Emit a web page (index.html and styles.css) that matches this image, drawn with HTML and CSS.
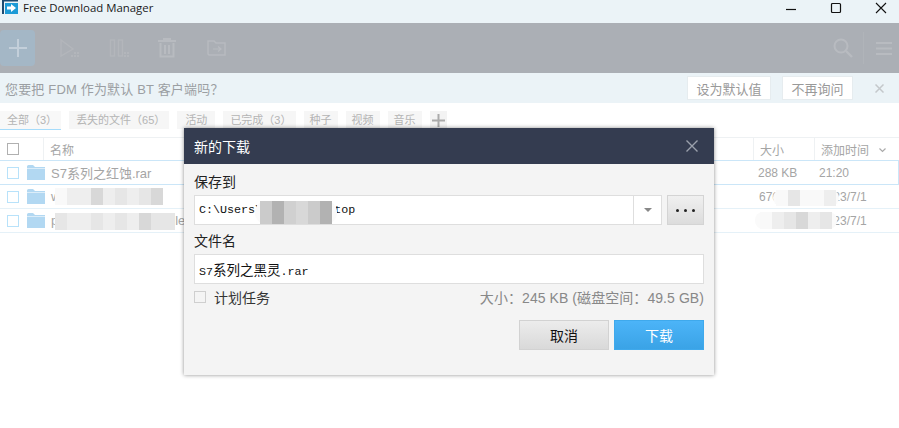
FILE: index.html
```html
<!DOCTYPE html>
<html lang="zh">
<head>
<meta charset="utf-8">
<title>Free Download Manager</title>
<link rel="stylesheet" href="styles.css">
</head>
<body>
<div class="app">
  <header class="titlebar">
    <svg class="logo" width="16" height="15" viewBox="0 0 16 15"><path d="M0 0H16V1.500H2V14H0Z" fill="#1c4a70"/><rect x="3" y="3" width="13" height="11" fill="#1c9ad6"/><path d="M5 6.500H9V4L14 8L9 12V9.500H5Z" fill="#fff"/></svg>
    <span class="app-name">Free Download Manager</span>
    <div class="winctl">
      <svg width="12" height="12" viewBox="0 0 12 12"><path d="M1 7.500H11" stroke="#111" stroke-width="1.200"/></svg>
      <svg width="12" height="12" viewBox="0 0 12 12"><rect x="1.500" y="1.500" width="9" height="9" rx="1" fill="none" stroke="#111" stroke-width="1.200"/></svg>
      <svg width="12" height="12" viewBox="0 0 12 12"><path d="M1 1L11 11M11 1L1 11" stroke="#111" stroke-width="1.100"/></svg>
    </div>
  </header>
  <div class="toolbar">
    <div class="add"><svg width="18" height="18" viewBox="0 0 18 18"><path d="M9 0V18M0 9H18" stroke="#c3cfda" stroke-width="2"/></svg></div>
    <svg class="tool t-play" width="22" height="22" viewBox="0 0 22 22"><path d="M1 2L13 11L1 18Z" fill="none" stroke="#b3b6bb" stroke-width="1.400"/><path d="M14 14h2v2h-2zM17 14h2v2h-2zM14 17h2v2h-2zM17 17h2v2h-2zM11 17h2v2h-2z" fill="#b3b6bb"/></svg>
    <svg class="tool t-pause" width="22" height="22" viewBox="0 0 22 22"><path d="M1.500 2h4v16h-4zM9.500 2h4v16h-4z" fill="none" stroke="#b3b6bb" stroke-width="1.400"/><path d="M15 14h2v2h-2zM18 14h2v2h-2zM15 17h2v2h-2zM18 17h2v2h-2z" fill="#b3b6bb"/></svg>
    <svg class="tool t-trash" width="18" height="20" viewBox="0 0 18 20"><path d="M0 3H18M6 3V1H12V3M2.500 5V18.500H15.500V5M7 7V16M11 7V16" fill="none" stroke="#b8bbc0" stroke-width="2"/></svg>
    <svg class="tool t-move" width="20" height="18" viewBox="0 0 20 18"><path d="M1 15V2H7L9 4H18V16H2Z" fill="none" stroke="#b8bbc0" stroke-width="1.400"/><path d="M6 10H14M11 7.500L14 10L11 12.500" fill="none" stroke="#b8bbc0" stroke-width="1.200"/></svg>
    <div class="spacer"></div>
    <svg class="tool t-search" width="20" height="20" viewBox="0 0 20 20"><circle cx="8" cy="8" r="6.500" fill="none" stroke="#b8bbc0" stroke-width="2"/><path d="M13 13L19 19" stroke="#b8bbc0" stroke-width="2.400"/></svg>
    <div class="sep"></div>
    <svg class="tool t-menu" width="16" height="13" viewBox="0 0 16 13"><path d="M0 1H16M0 6.500H16M0 12H16" stroke="#b8bbc0" stroke-width="2"/></svg>
  </div>
  <div class="notice">
    <span class="notice-text">您要把 FDM 作为默认 BT 客户端吗？</span>
    <div class="spacer"></div>
    <span class="notice-btn nb-default">设为默认值</span>
    <span class="notice-btn nb-never">不再询问</span>
    <svg class="notice-x" width="9" height="9" viewBox="0 0 9 9"><path d="M.5 .5L8.500 8.500M8.500 .5L.5 8.500" stroke="#c4c8cb" stroke-width="1.500"/></svg>
  </div>
  <nav class="tabs">
    <span class="tab tab-on">全部（3）</span>
    <span class="tab">丢失的文件（65）</span>
    <span class="tab tab-wide">活动</span>
    <span class="tab">已完成（3）</span>
    <span class="tab tab-short">种子</span>
    <span class="tab tab-short">视频</span>
    <span class="tab tab-short">音乐</span>
    <span class="tab tab-plus"><svg width="13" height="13" viewBox="0 0 13 13"><path d="M6.500 0V13M0 6.500H13" stroke="#aaa" stroke-width="2"/></svg></span>
  </nav>
  <section class="table">
    <div class="row head">
      <span class="c-check"><i class="box box-head"></i></span>
      <span class="c-name">名称</span>
      <span class="c-size">大小</span>
      <span class="c-date">添加时间<svg class="chev" width="7" height="5" viewBox="0 0 7 5"><path d="M.5 .5L3.500 3.500L6.500 .5" fill="none" stroke="#aaa" stroke-width="1.200"/></svg></span>
    </div>
    <div class="row sel">
      <span class="c-check"><i class="box"></i></span>
      <svg class="folder" width="18" height="15" viewBox="0 0 18 15"><path d="M0 1.500Q0 0 1.500 0H6L8 2H18V15H0Z" fill="#b2d8f2"/><path d="M0 3.500H18" stroke="#dcedf9"/></svg>
      <span class="c-name">S7系列之红蚀.rar</span>
      <span class="c-size">288 KB</span>
      <span class="c-date">21:20</span>
    </div>
    <div class="row">
      <span class="c-check"><i class="box"></i></span>
      <svg class="folder" width="18" height="15" viewBox="0 0 18 15"><path d="M0 1.500Q0 0 1.500 0H6L8 2H18V15H0Z" fill="#b2d8f2"/><path d="M0 3.500H18" stroke="#dcedf9"/></svg>
      <span class="c-name">w</span>
      <span class="c-size">676 KB</span>
      <span class="c-date">2023/7/1</span>
    </div>
    <div class="row">
      <span class="c-check"><i class="box"></i></span>
      <svg class="folder" width="18" height="15" viewBox="0 0 18 15"><path d="M0 1.500Q0 0 1.500 0H6L8 2H18V15H0Z" fill="#b2d8f2"/><path d="M0 3.500H18" stroke="#dcedf9"/></svg>
      <span class="c-name">p<span class="name-tail">le</span></span>
      <span class="c-size">1 MB</span>
      <span class="c-date">2023/7/1</span>
    </div>
  </section>

  <div class="mosaic m-row2"><i class="w"></i><i class="l"></i><i class="l"></i><i class="d"></i><i class="l"></i><i class="m"></i><i class="l"></i><i class="m"></i><i class="d"></i></div>
  <div class="mosaic m-row3"><i class="m"></i><i class="l"></i><i class="l"></i><i class="m"></i><i class="l"></i><i class="m"></i><i class="l"></i><i class="d"></i><i class="m"></i><i class="m"></i></div>
  <div class="mosaic m-size2"><i class="w"></i><i class="m"></i><i class="w"></i><i class="w"></i><i class="l"></i></div>
  <div class="mosaic m-size3"><i class="w"></i><i class="l"></i><i class="m"></i><i class="d"></i><i class="l"></i><i class="m"></i></div>

  <div class="dialog">
    <div class="dlg-head">
      <span>新的下载</span>
      <svg width="12" height="12" viewBox="0 0 12 12"><path d="M.5 .5L11.500 11.500M11.500 .5L.5 11.500" stroke="#9aa0ac" stroke-width="1.400"/></svg>
    </div>
    <div class="dlg-body">
      <label class="dlg-label lb-save">保存到</label>
      <div class="path-row">
        <div class="combo">
          <span class="mono">C:\Users\<span class="path-gap"></span>top</span>
          <span class="combo-arrow"><i></i></span>
        </div>
        <button class="dots"><i></i><i></i><i></i></button>
      </div>
      <label class="dlg-label lb-file">文件名</label>
      <div class="input"><span class="mono">S7<span class="mono-cjk">系列之黑灵</span>.rar</span></div>
      <div class="meta">
        <i class="box box-task"></i>
        <span class="task">计划任务</span>
        <span class="spacer"></span>
        <span class="sizeinfo">大小：245 KB (磁盘空间：49.5 GB)</span>
      </div>
      <div class="actions">
        <button class="btn btn-cancel">取消</button>
        <button class="btn btn-ok">下载</button>
      </div>
    </div>
    <div class="mosaic m-path"><i class="p1"></i><i class="p2"></i><i class="p3"></i><i class="p4"></i><i class="p1"></i><i class="p2"></i></div>
  </div>
</div>
</body>
</html>
```
FILE: styles.css
```css
* { box-sizing: border-box; }
html, body { margin: 0; padding: 0; }
body {
  width: 899px;
  height: 428px;
  overflow: hidden;
  background: #fff;
  font-family: "Liberation Sans", "Noto Sans CJK SC", sans-serif;
}
.app { position: relative; width: 899px; height: 428px; display: flex; flex-direction: column; }
.spacer { flex: 1; }

.titlebar { height: 23px; background: #ebf3f7; display: flex; align-items: flex-start; }
.logo { margin-left: 2px; flex: none; }
.app-name { margin-left: 5px; font: 11.400px/15px "Open Sans", sans-serif; color: #1a1a1a; }
.winctl { margin-left: auto; display: flex; gap: 33px; margin-right: 12px; margin-top: 2px; }

.toolbar { height: 50px; background: #abafb5; display: flex; align-items: center; }
.add { width: 35px; height: 36px; background: #a4b7c6; border-radius: 4px; display: flex; align-items: center; justify-content: center; }
.tool { display: block; flex: none; }
.t-play { margin-left: 25px; margin-top: 2px; }
.t-pause { margin-left: 27px; margin-top: 2px; }
.t-trash { margin-left: 27px; }
.t-move { margin-left: 31px; }
.t-search { margin-right: 10px; }
.sep { width: 1px; height: 32px; background: #b0b4b9; }
.t-menu { margin-left: 12px; margin-right: 7px; }

.notice { height: 30px; background: #ebf3f7; display: flex; align-items: center; padding-left: 5px; }
.notice-text { font-size: 13px; letter-spacing: .17px; color: #9b9fa3; }
.notice-btn { height: 24px; background: #fff; border: 1px solid #e6ecef; font-size: 13px; color: #999; display: flex; align-items: center; justify-content: center; }
.nb-default { width: 84px; }
.nb-never { width: 71px; margin-left: 11px; }
.notice-x { margin: 0 15px 0 22px; }

.tabs { height: 26px; margin-top: 8px; display: flex; gap: 8px; align-items: flex-start; }
.tab { height: 18px; padding: 0 4px 0 7px; background: #f6f6f6; font-size: 11px; line-height: 18px; color: #b4b4b4; white-space: nowrap; }
.tab-on { border-bottom: 1px solid #a6dcfb; height: 19px; background: #f8f8f8; }
.tab-wide { padding: 0 8px; }
.tab-short { padding: 0 6px; }
.tab-plus { width: 17px; padding: 0; background: #f3f3f3; display: flex; align-items: center; justify-content: center; }

.table { display: flex; flex-direction: column; border-top: 1px solid #eef1f3; }
.row { height: 24px; display: flex; align-items: center; font-size: 13px; color: #a5a5a5; border-bottom: 1px solid #e5f1f8; }
.row.head { height: 23px; font-size: 12px; border-bottom: 1px solid #cbe6f8; }
.row.sel { border-bottom: 1px solid #cbe6f8; border-right: 1px solid #cbe6f8; }
.c-check { width: 27px; padding-left: 7px; flex: none; }
.head .c-check { width: 44px; border-right: 1px solid #eef1f3; height: 100%; display: flex; align-items: center; }
.head .c-name { margin-left: 6px; }
.box { display: block; width: 12px; height: 12px; border: 1px solid #b8e2fa; background: #fff; }
.box-head { border-color: #b0b0b0; }
.folder { margin-right: 6px; flex: none; }
.c-name { flex: 1; white-space: nowrap; }
.c-size { width: 61px; padding-left: 6px; height: 100%; display: flex; align-items: center; flex: none; font-size: 12px; }
.c-date { width: 85px; padding-left: 6px; display: flex; align-items: center; height: 100%; flex: none; font-size: 12px; }
.head .c-size, .head .c-date { border-left: 1px solid #eef1f3; }
.name-tail { margin-left: 117px; }
.chev { margin-top: 2px; margin-left: 10px; }

.mosaic { position: absolute; display: flex; background: #fafafa; }
.mosaic i { display: block; width: 12px; height: 100%; }
.mosaic .w { background: #f9f9f9; }
.mosaic .l { background: #eeeeee; }
.mosaic .m { background: #e6e6e6; }
.mosaic .d { background: #d8d8d8; }
.mosaic .p1 { background: #cbcbcb; }
.mosaic .p2 { background: #b2b2b2; }
.mosaic .p3 { background: #d0d0d0; }
.mosaic .p4 { background: #d8d8d8; }
.m-row2 { left: 55px; top: 188px; height: 17px; }
.m-row3 { left: 55px; top: 213px; height: 17px; }
.m-size2 { left: 773px; top: 190px; height: 16px; padding: 0 3px; border-radius: 8px; }
.m-size3 { left: 755px; top: 212px; height: 17px; padding: 0 5px; border-radius: 8px; }

.dialog { position: absolute; left: 184px; top: 128px; width: 530px; height: 247px; background: #f4f4f4; box-shadow: 0 0 4px rgba(0,0,0,.45); }
.dlg-head { height: 36px; background: #343c50; color: #fff; font-size: 14px; display: flex; align-items: center; justify-content: space-between; padding: 0 16px 0 10px; }
.dlg-body { padding: 0 10px; display: flex; flex-direction: column; }
.dlg-label { display: block; font-size: 14px; line-height: 20px; color: #222; }
.lb-save { margin-top: 8px; }
.lb-file { margin-top: 6px; }
.path-row { display: flex; gap: 5px; margin-top: 3px; }
.combo, .input { height: 30px; background: #fff; border: 1px solid #dedede; display: flex; align-items: center; padding-left: 4px; }
.combo { flex: 1; }
.input { margin-top: 3px; }
.mono { font: 11.700px "Liberation Mono", "Noto Sans CJK SC", monospace; color: #111; white-space: nowrap; }
.mono-cjk { font-size: 13.500px; }
.path-gap { display: inline-block; width: 72px; }
.combo-arrow { margin-left: auto; width: 28px; height: 100%; border-left: 1px solid #dedede; display: flex; align-items: center; justify-content: center; }
.combo-arrow i { display: block; width: 0; height: 0; border: 4px solid transparent; border-top: 4px solid #888; border-bottom: 0; }
.dots { width: 37px; height: 30px; padding: 0; border: 1px solid #d4d4d4; background: linear-gradient(#f0f0f0, #dcdcdc); display: flex; align-items: center; justify-content: center; gap: 5px; }
.dots i { display: block; width: 3px; height: 3px; border-radius: 50%; background: #222; }
.meta { display: flex; align-items: center; height: 20px; margin-top: 3px; }
.box-task { width: 12px; height: 12px; border: 1px solid #cfcfcf; background: #f4f4f4; }
.task { margin-left: 8px; font-size: 14px; color: #333; }
.sizeinfo { font-size: 14px; letter-spacing: .07px; color: #888; }
.actions { display: flex; justify-content: flex-end; gap: 5px; margin-top: 13px; }
.btn { width: 90px; height: 30px; padding: 0; font: 14px "Liberation Sans", "Noto Sans CJK SC", sans-serif; }
.btn-cancel { border: 1px solid #d2d2d2; background: linear-gradient(#ececec, #d9d9d9); color: #111; }
.btn-ok { border: 1px solid #3fa9ec; background: linear-gradient(#4cb4f8, #3aa3e6); color: #fff; }
.m-path { left: 71px; top: 73px; height: 23px; border-radius: 11px; padding: 0 5px; }
```
